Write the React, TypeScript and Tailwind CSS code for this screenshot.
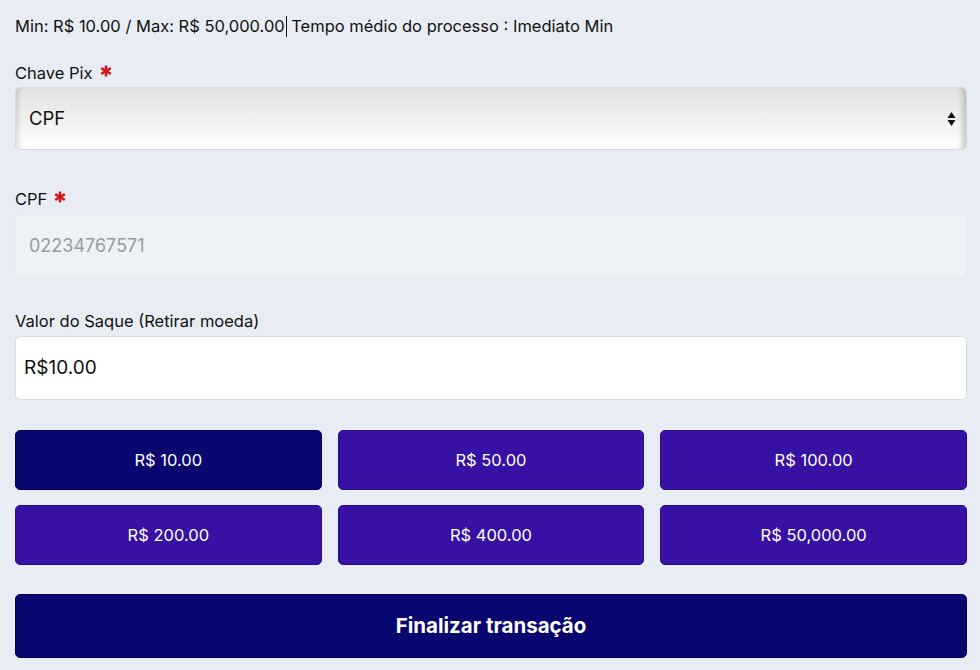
import React from "react";

const amounts = ["R$ 10.00", "R$ 50.00", "R$ 100.00", "R$ 200.00", "R$ 400.00", "R$ 50,000.00"];

function Star() {
  return (
    <svg width="12" height="12" viewBox="0 0 12 12" className="ml-[7px] mb-[4px]">
      <g stroke="#d0191f" strokeWidth="2.6" strokeLinecap="butt">
        <line x1="6" y1="0.5" x2="6" y2="11.5" />
        <line x1="1.2" y1="3.2" x2="10.8" y2="8.8" />
        <line x1="1.2" y1="8.8" x2="10.8" y2="3.2" />
      </g>
    </svg>
  );
}

export default function App() {
  return (
    <div
      className="min-h-[670px] w-full bg-[#e8edf5] pl-[15px] pr-[13px] pt-[15px] text-[#111]"
      style={{ fontFamily: "Inter, 'Noto Sans', sans-serif" }}
    >
      <div className="flex items-center text-[16.5px] leading-[22px]">
        <span>Min: R$ 10.00 / Max: R$ 50,000.00</span>
        <span className="ml-[1px] mr-[4px] inline-block h-[21px] w-[1.5px] bg-[#111]" />
        <span>Tempo médio do processo : Imediato Min</span>
      </div>

      <div className="mt-[26px] flex items-center text-[16.5px] leading-[20px]">
        Chave Pix <Star />
      </div>
      <div className="mt-[4px] flex h-[63px] items-center justify-between rounded-[5px] border border-[#d8d8d8] bg-gradient-to-b from-[#e3e3e3] via-[#f0f0f0] to-[#ffffff] pl-[13px] pr-[10px] shadow-[inset_6px_0_6px_-5px_rgba(0,0,0,0.18),inset_-8px_0_6px_-5px_rgba(0,0,0,0.22)]">
        <span className="text-[18.5px]">CPF</span>
        <svg width="9" height="16" viewBox="0 0 9 16">
          <path d="M4.5 1 L8.5 7 H0.5 Z" fill="#111" />
          <path d="M4.5 15 L8.5 9 H0.5 Z" fill="#111" />
        </svg>
      </div>

      <div className="mt-[39px] flex items-center text-[16.5px] leading-[20px]">
        CPF <Star />
      </div>
      <div className="mt-[5px] flex h-[63px] items-center rounded-[5px] border border-[#e6eaef] bg-[#eef2f6] pl-[13px]">
        <span className="text-[18px] text-[#9a9a9a]">02234767571</span>
      </div>

      <div className="mt-[34px] text-[16.5px] leading-[20px]">Valor do Saque (Retirar moeda)</div>
      <div className="mt-[5px] flex h-[64px] items-center rounded-[5px] border border-[#d9dde3] bg-white pl-[8px]">
        <span className="text-[19px]">R$10.00</span>
      </div>

      <div className="mt-[30px] grid grid-cols-3 gap-x-[16px] gap-y-[15px]">
        {amounts.map((a, i) => (
          <button
            key={a}
            className={`flex h-[60px] items-center justify-center rounded-[5px] border text-[16.5px] text-white ${
              i === 0 ? "border-[#05044f] bg-[#0a0771]" : "border-[#2a0c8a] bg-[#3611a3]"
            }`}
          >
            {a}
          </button>
        ))}
      </div>

      <button className="mt-[29px] flex h-[64px] w-full items-center justify-center rounded-[5px] border border-[#05044f] bg-[#08066f] text-[20.5px] font-bold text-white">
        Finalizar transação
      </button>
    </div>
  );
}
